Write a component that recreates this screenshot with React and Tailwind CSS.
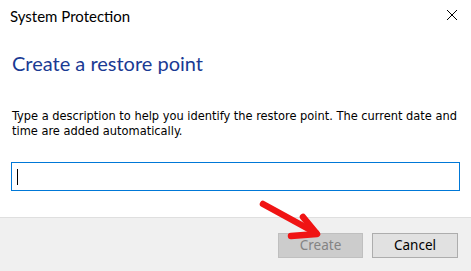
export default function App() {
  return (
    <div className="w-[471px] h-[271px] bg-white flex flex-col overflow-hidden relative">
      <div className="h-[30px] flex items-start justify-between pl-[10px] pr-[13px] pt-[7px]">
        <span className="text-[15px] leading-[18px] text-black" style={{ fontFamily: 'Lato, sans-serif' }}>System Protection</span>
        <svg width="12" height="12" viewBox="0 0 12 12" className="mt-[2px]">
          <path d="M1 1 L11 11 M11 1 L1 11" stroke="#000" strokeWidth="1" />
        </svg>
      </div>
      <div className="pl-[12px] pt-[20px]">
        <h1 className="text-[20px] leading-[26px] text-[#1a3a93]" style={{ fontFamily: 'Lato, sans-serif' }}>Create a restore point</h1>
      </div>
      <p className="pl-[12px] pr-[2px] pt-[32px] text-[12.7px] leading-[15px] text-black" style={{ fontFamily: '"DejaVu Sans", sans-serif', fontStretch: 'condensed' }}>
        Type a description to help you identify the restore point. The current date and time are added automatically.
      </p>
      <div className="mx-[11px] mt-[24px] h-[29px] border border-[#0078d7] flex items-center pl-[5px]">
        <div className="w-px h-[16px] bg-black" />
      </div>
      <div className="mt-[26px] flex-1 bg-[#f0f0f0] border-t border-[#dfdfdf] flex items-start justify-end gap-[9px] pt-[15px] pr-[13px]">
        <button className="w-[85px] h-[25px] bg-[#cccccc] border border-[#bfbfbf] text-[#838383] text-[13.5px]" style={{ fontFamily: '"Noto Sans", sans-serif' }}>Create</button>
        <button className="w-[86px] h-[25px] bg-[#e1e1e1] border border-[#adadad] text-black text-[13.5px]" style={{ fontFamily: '"Noto Sans", sans-serif' }}>Cancel</button>
      </div>
      <svg className="absolute left-0 top-0 pointer-events-none" width="471" height="271">
        <g stroke="#f01414" strokeWidth="6.5" strokeLinecap="round" strokeLinejoin="round" fill="none">
          <path d="M263 204 L316 233" />
          <path d="M303 217 L317 234 L291 236" />
        </g>
      </svg>
    </div>
  );
}
